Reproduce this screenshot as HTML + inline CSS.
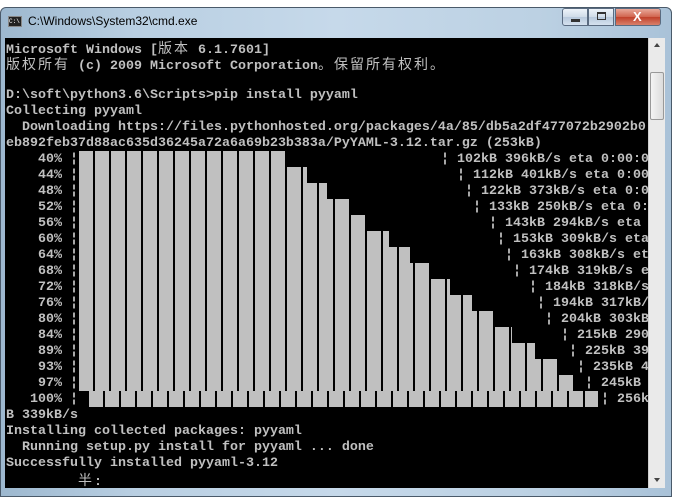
<!DOCTYPE html>
<html><head><meta charset="utf-8"><style>
*{margin:0;padding:0;box-sizing:border-box}
body{width:674px;height:497px;overflow:hidden;background:#fff;position:relative;font-family:"Liberation Sans",sans-serif}
#frame{position:absolute;left:0;top:7px;width:672px;height:490px;border-radius:6px 6px 0 0;background:linear-gradient(90deg,#9db8cf 0%,#b9cfe2 20%,#c6d9ea 50%,#bcd1e3 80%,#a9c2d8 100%);border:1px solid #4a5a6a}
#title{position:absolute;left:28px;top:14px;font-size:12px;color:#000}
#icon{position:absolute;left:8px;top:16px;width:14px;height:11px;background:#222;border:1px solid #888;color:#fff;font-size:6px;line-height:9px;font-family:"Liberation Mono",monospace}
.btn{position:absolute;top:8px;height:18px;border:1px solid #5a6b80;background:linear-gradient(#eef3f9,#cfdbe8 50%,#b8c9dc 51%,#d5e2ef)}
#term{position:absolute;left:5px;top:38px;width:643px;height:450px;background:#000;overflow:hidden}
#sb{position:absolute;left:648px;top:38px;width:17px;height:450px;background:#eaeaea;border-left:1px solid #d0d0d0}
.l{position:absolute;left:1px;height:16px;line-height:16px;font-family:"Liberation Mono",monospace;font-size:13.33px;font-weight:bold;color:#c0c0c0;white-space:pre}
.c{display:inline-block;width:16px;font-family:"Noto Sans CJK SC",sans-serif;font-weight:normal;font-size:14px;text-align:left}
.bar{position:absolute;height:16px;background:repeating-linear-gradient(90deg,#c0c0c0 0 14px,#000 14px 16px)}
</style></head><body>
<div id="frame"></div>
<div id="icon">C:\</div>
<div id="title">C:\Windows\System32\cmd.exe</div>
<div class="btn" style="left:562px;width:26px;border-radius:3px 0 0 3px"><div style="position:absolute;left:8px;top:10px;width:9px;height:3px;background:#333"></div></div>
<div class="btn" style="left:588px;width:26px"><div style="position:absolute;left:8px;top:3px;width:9px;height:8px;border:1px solid #333;border-top-width:2px"></div></div>
<div class="btn" style="left:615px;width:46px;border-radius:0 3px 3px 0;background:linear-gradient(#e9a99a,#d0644e 50%,#c0402a 51%,#d9806a)"><div style="position:absolute;left:17px;top:0;color:#fff;font-weight:bold;font-size:13px">X</div></div>
<div id="term">
<div class="l" style="top:2px">Microsoft Windows [<span class="c">版</span><span class="c">本</span> 6.1.7601]</div>
<div class="l" style="top:18px"><span class="c">版</span><span class="c">权</span><span class="c">所</span><span class="c">有</span> (c) 2009 Microsoft Corporation<span class="c">。</span><span class="c">保</span><span class="c">留</span><span class="c">所</span><span class="c">有</span><span class="c">权</span><span class="c">利</span><span class="c">。</span></div>
<div class="l" style="top:50px">D:\soft\python3.6\Scripts&gt;pip install pyyaml</div>
<div class="l" style="top:66px">Collecting pyyaml</div>
<div class="l" style="top:82px">  Downloading https://files.pythonhosted.org/packages/4a/85/db5a2df477072b2902b0</div>
<div class="l" style="top:98px">eb892feb37d88ac635d36245a72a6a69b23b383a/PyYAML-3.12.tar.gz (253kB)</div>
<div class="l" style="top:114px">    40% ¦</div><div class="bar" style="top:113px;left:74px;width:207px;background-position:0 0"></div><div class="l" style="top:114px;left:436px">¦ 102kB 396kB/s eta 0:00:0</div>
<div class="l" style="top:130px">    44% ¦</div><div class="bar" style="top:129px;left:74px;width:228px"></div><div class="l" style="top:130px;left:452px">¦ 112kB 401kB/s eta 0:00</div>
<div class="l" style="top:146px">    48% ¦</div><div class="bar" style="top:145px;left:74px;width:248px"></div><div class="l" style="top:146px;left:460px">¦ 122kB 373kB/s eta 0:0</div>
<div class="l" style="top:162px">    52% ¦</div><div class="bar" style="top:161px;left:74px;width:270px"></div><div class="l" style="top:162px;left:468px">¦ 133kB 250kB/s eta 0:</div>
<div class="l" style="top:178px">    56% ¦</div><div class="bar" style="top:177px;left:74px;width:288px"></div><div class="l" style="top:178px;left:484px">¦ 143kB 294kB/s eta</div>
<div class="l" style="top:194px">    60% ¦</div><div class="bar" style="top:193px;left:74px;width:310px"></div><div class="l" style="top:194px;left:492px">¦ 153kB 309kB/s eta</div>
<div class="l" style="top:210px">    64% ¦</div><div class="bar" style="top:209px;left:74px;width:331px"></div><div class="l" style="top:210px;left:500px">¦ 163kB 308kB/s et</div>
<div class="l" style="top:226px">    68% ¦</div><div class="bar" style="top:225px;left:74px;width:351px"></div><div class="l" style="top:226px;left:508px">¦ 174kB 319kB/s e</div>
<div class="l" style="top:242px">    72% ¦</div><div class="bar" style="top:241px;left:74px;width:371px"></div><div class="l" style="top:242px;left:524px">¦ 184kB 318kB/s</div>
<div class="l" style="top:258px">    76% ¦</div><div class="bar" style="top:257px;left:74px;width:393px"></div><div class="l" style="top:258px;left:532px">¦ 194kB 317kB/</div>
<div class="l" style="top:274px">    80% ¦</div><div class="bar" style="top:273px;left:74px;width:415px"></div><div class="l" style="top:274px;left:540px">¦ 204kB 303kB</div>
<div class="l" style="top:290px">    84% ¦</div><div class="bar" style="top:289px;left:74px;width:433px"></div><div class="l" style="top:290px;left:556px">¦ 215kB 290</div>
<div class="l" style="top:306px">    89% ¦</div><div class="bar" style="top:305px;left:74px;width:456px"></div><div class="l" style="top:306px;left:564px">¦ 225kB 39</div>
<div class="l" style="top:322px">    93% ¦</div><div class="bar" style="top:321px;left:74px;width:478px"></div><div class="l" style="top:322px;left:572px">¦ 235kB 4</div>
<div class="l" style="top:338px">    97% ¦</div><div class="bar" style="top:337px;left:74px;width:495px"></div><div class="l" style="top:338px;left:580px">¦ 245kB</div>
<div class="l" style="top:354px">   100% ¦</div><div class="bar" style="top:353px;left:82px;width:511px;background:repeating-linear-gradient(90deg,#000 0 2px,#c0c0c0 2px 16px)"></div><div class="l" style="top:354px;left:596px">¦ 256k</div>
<div class="l" style="top:370px">B 339kB/s</div>
<div class="l" style="top:386px">Installing collected packages: pyyaml</div>
<div class="l" style="top:402px">  Running setup.py install for pyyaml ... done</div>
<div class="l" style="top:418px">Successfully installed pyyaml-3.12</div>
<div class="l" style="top:434px">         <span class="c">半</span>:</div>
</div>
<div id="sb">
<div style="position:absolute;left:5px;top:5px;width:0;height:0;border:3px solid transparent;border-bottom:4px solid #444;border-top:0"></div>
<div style="position:absolute;left:1px;top:34px;width:14px;height:48px;border:1px solid #999;border-radius:2px;background:linear-gradient(90deg,#f4f4f4,#dcdcdc)"></div>
<div style="position:absolute;left:5px;top:440px;width:0;height:0;border:3px solid transparent;border-top:4px solid #444;border-bottom:0"></div>
</div>
</body></html>
